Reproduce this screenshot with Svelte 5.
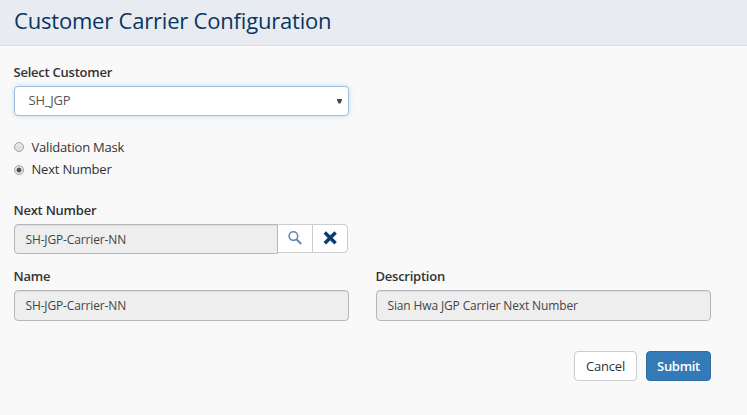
<script>
  let customer = $state('SH_JGP');
  let mode = $state('next');
  const modes = [
    { id: 'mask', label: 'Validation Mask' },
    { id: 'next', label: 'Next Number' }
  ];
</script>

<div class="page">
  <header><h1>Customer Carrier Configuration</h1></header>
  <main>
    <section class="field half">
      <div class="label">Select Customer</div>
      <div class="select" role="button" tabindex="0">
        <span class="value">{customer}</span>
        <svg width="5" height="5" viewBox="0 0 5 5"><path d="M0 0h5v1L3.5 4.5h-2L0 1z" fill="#484848" /></svg>
      </div>
    </section>

    <div class="radios">
      {#each modes as m}
        <label class="option">
          <input type="radio" name="mode" value={m.id} bind:group={mode} />
          <span>{m.label}</span>
        </label>
      {/each}
    </div>

    <section class="field half lookup">
      <div class="label">Next Number</div>
      <div class="group">
        <div class="input"><span>SH-JGP-Carrier-NN</span></div>
        <button class="addon search" aria-label="Search">
          <svg width="14" height="14" viewBox="0 0 14 14" fill="none" stroke="#6489b0">
            <circle cx="5.4" cy="5.1" r="4.3" stroke-width="1.6" />
            <path d="M8.4 8.2L13.2 13" stroke-width="2" />
          </svg>
        </button>
        <button class="addon clear" aria-label="Clear">
          <svg width="14" height="14" viewBox="0 0 14 14">
            <path d="M1.8 1.4L12.6 12.2M12.6 1.4L1.8 12.2" stroke="#073d73" stroke-width="3.5" />
          </svg>
        </button>
      </div>
    </section>

    <div class="row">
      <section class="field half">
        <div class="label">Name</div>
        <div class="input"><span>SH-JGP-Carrier-NN</span></div>
      </section>
      <section class="field half">
        <div class="label">Description</div>
        <div class="input"><span>Sian Hwa JGP Carrier Next Number</span></div>
      </section>
    </div>

    <div class="actions">
      <button class="btn cancel">Cancel</button>
      <button class="btn submit">Submit</button>
    </div>
  </main>
</div>

<style>
  :global(body) { background: #f9f9f9; }
  .page {
    width: 747px;
    height: 415px;
    overflow: hidden;
    background: #f9f9f9;
    font-family: "Open Sans", sans-serif;
    font-size: 13px;
    letter-spacing: -0.2px;
    color: #333;
  }
  .page * { box-sizing: border-box; }
  header {
    height: 46px;
    background: #e8ebf0;
    border-bottom: 1px solid #dbdee3;
    padding: 5px 14px 0;
  }
  h1 {
    margin: 0;
    font-size: 22px;
    line-height: 30px;
    font-weight: 400;
    letter-spacing: -0.2px;
    color: #073763;
    white-space: nowrap;
  }
  main { padding: 17px 36px 0 14px; }
  .half { width: 335px; }
  .label {
    height: 18px;
    line-height: 18px;
    font-weight: 600;
    letter-spacing: -0.24px;
    color: #333;
    margin-bottom: 5px;
    margin-left: -0.5px;
  }
  .select {
    height: 30px;
    display: flex;
    align-items: center;
    justify-content: space-between;
    padding: 0 6px 0 13.5px;
    background: #fff;
    border: 1px solid #a0bedb;
    border-radius: 4px;
    box-shadow: 0 0 5px rgba(102, 175, 233, 0.4);
    color: #555;
    outline: none;
  }
  .select .value { padding-bottom: 2px; }
  .select svg { margin-top: 1px; }
  .radios { margin-top: 20px; }
  .option { display: flex; align-items: center; height: 22px; gap: 7px; }
  .option + .option { height: 23px; }
  .option input {
    appearance: none;
    width: 10px;
    height: 10px;
    margin: 0;
    border: 1px solid #a3a3a3;
    border-radius: 50%;
    background: linear-gradient(#e9e9e9, #dcdcdc);
  }
  .option span { margin-left: 0.5px; }
  .option + .option span { padding-bottom: 1px; }
  .option input:checked {
    background: radial-gradient(circle, #505050 0 2px, #e4e4e4 2.8px);
  }
  .lookup { margin-top: 20px; }
  .group { display: flex; align-items: flex-start; }
  .input {
    height: 30px;
    display: flex;
    align-items: center;
    padding: 0 10.5px;
    background: #eee;
    border: 1px solid #b5b7ba;
    border-radius: 4px;
    box-shadow: inset 0 1px 1px rgba(0, 0, 0, 0.075);
    font-size: 12px;
    letter-spacing: -0.14px;
    color: #444;
    white-space: nowrap;
  }
  .group .input { width: 264px; border-radius: 4px 0 0 4px; }
  .addon {
    height: 29px;
    margin: 0;
    padding: 0 0 2px;
    display: flex;
    align-items: center;
    justify-content: center;
    background: #fff;
    border: 1px solid #ccc;
  }
  .search { width: 35px; border-left: 0; }
  .clear { width: 36px; border-radius: 0 4px 4px 0; margin-left: -1px; }
  .row { display: flex; gap: 27px; margin-top: 13px; }
  .row .input { height: 31px; }
  .actions { display: flex; justify-content: flex-end; gap: 9px; margin-top: 30px; }
  .btn {
    height: 30px;
    padding: 0;
    border-radius: 4px;
    font: 400 13px "Open Sans", sans-serif;
    letter-spacing: -0.2px;
  }
  .cancel { width: 63px; background: #fff; border: 1px solid #ccc; color: #333; }
  .submit { width: 65px; background: #337ab7; border: 1px solid #2e6da4; color: #fff; font-weight: 600; letter-spacing: -0.3px; }
</style>
